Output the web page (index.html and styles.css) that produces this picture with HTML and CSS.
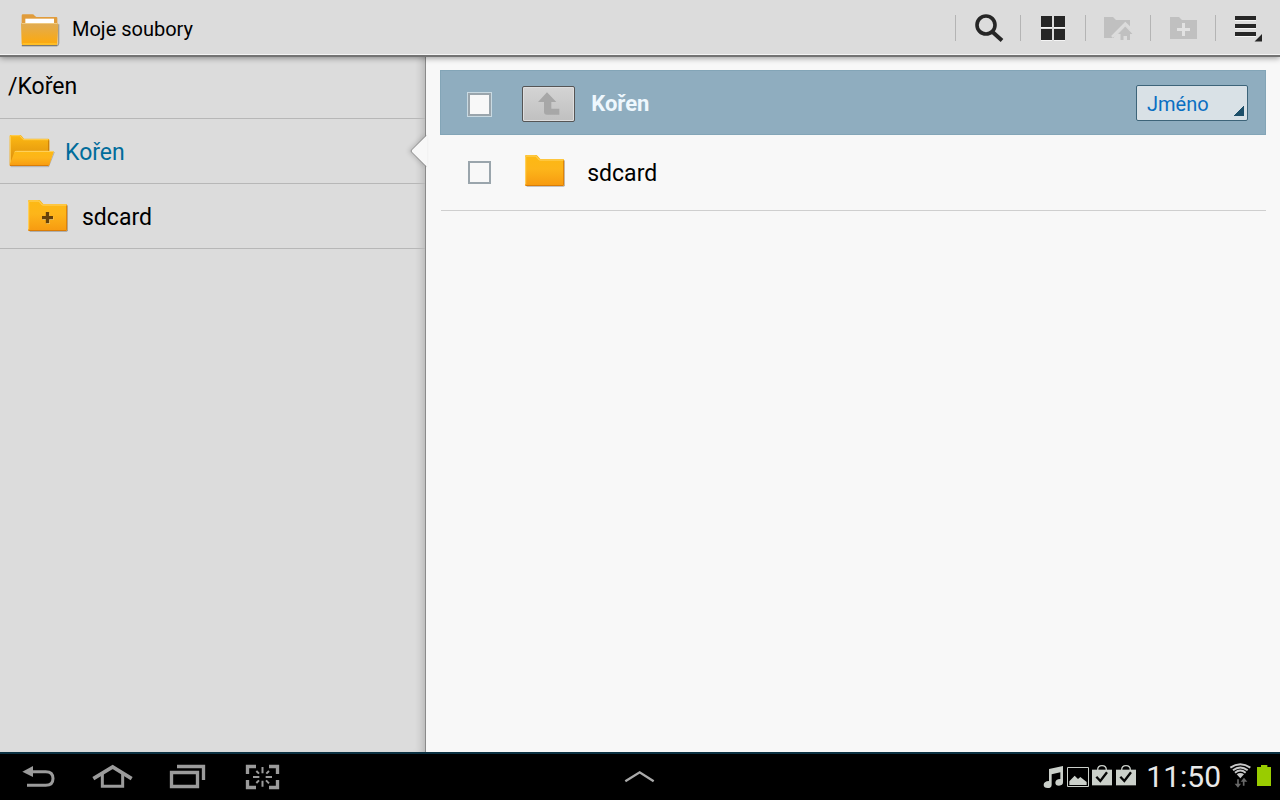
FILE: index.html
```html
<!DOCTYPE html>
<html lang="cs">
<head>
<meta charset="utf-8">
<title>Moje soubory</title>
<link rel="stylesheet" href="styles.css">
</head>
<body>
<svg class="defs" width="0" height="0" aria-hidden="true">
  <defs>
    <linearGradient id="gold" x1="0" y1="0" x2="0" y2="1">
      <stop offset="0" stop-color="#fdb913"/><stop offset=".45" stop-color="#fdb51a"/><stop offset="1" stop-color="#f79a10"/>
    </linearGradient>
    <linearGradient id="back" x1="0" y1="0" x2="0" y2="1">
      <stop offset="0" stop-color="#fdb913"/><stop offset="1" stop-color="#d98a0c"/>
    </linearGradient>
    <linearGradient id="app" x1="0" y1="0" x2="0" y2="1">
      <stop offset="0" stop-color="#dfac57"/><stop offset="1" stop-color="#ffa908"/>
    </linearGradient>
    <symbol id="folder" viewBox="0 0 120 96">
      <path d="M5 94h111q3 0 3-4V16" fill="none" stroke="#000" stroke-opacity=".25" stroke-width="3"/>
      <path d="M0 4q0-4 4-4h29q3 0 5 3l8 9h68q3 0 3 3v74q0 4-4 4H4q-4 0-4-4z" fill="url(#gold)"/>
      <path d="M2 88V5q0-2 3-2h27l11 12h71" fill="none" stroke="#ffd568" stroke-width="3"/>
      <path d="M2 91.500h112q2 0 2-3V17" fill="none" stroke="#d97d08" stroke-width="3"/>
    </symbol>
  </defs>
</svg>

<header class="topbar">
  <svg class="app-icon" width="40" height="34" viewBox="0 0 120 102" aria-hidden="true">
    <path d="M5 98h107q4-2 4-8V34" fill="none" stroke="#77736a" stroke-opacity=".6" stroke-width="4"/>
    <path d="M5 8q0-4 4-4h28q4 0 7 4l5 4h60q3 0 3 4v20H5z" fill="#e09c3c"/>
    <path d="M16 17h86v14H16z" fill="#fff"/>
    <path d="M3 33q0-3 3-3h105q4 0 4 4l-3 58q0 4-4 4H9q-4 0-4-4z" fill="url(#app)"/>
    <path d="M5 31.500h108" stroke="#f0ca80" stroke-width="3"/>
    <path d="M8 93h102" stroke="#ffd23f" stroke-width="3"/>
    <path d="M6 98h105" stroke="#77736a" stroke-width="3"/>
  </svg>
  <h1 class="app-title">Moje soubory</h1>
  <div class="actions">
    <button class="action" aria-label="Hledat"><svg width="64" height="28" viewBox="0 0 64 28">
      <circle cx="30" cy="10" r="9" fill="none" stroke="#262626" stroke-width="3.600"/><path d="M36 16.500l10 9" stroke="#262626" stroke-width="4"/></svg></button>
    <button class="action" aria-label="Mřížka"><svg width="64" height="28" viewBox="0 0 64 28">
      <path d="M20 2h11v11H20zM33 2h11v11H33zM20 15h11v11H20zM33 15h11v11H33z" fill="#fff" opacity=".7"/>
      <path d="M20 1h11v11H20zM33 1h11v11H33zM20 14h11v11H20zM33 14h11v11H33z" fill="#262626"/></svg></button>
    <button class="action" aria-label="Domů" disabled><svg width="64" height="28" viewBox="0 0 64 28">
      <path d="M18 2h9l3 3h14v18H18z" fill="#c0c0c0"/>
      <path d="M28 21.500L39.300 10l8 8V25H28z" fill="#dcdcdc"/>
      <path d="M26 22l13.300-13.500L49 18" fill="none" stroke="#dcdcdc" stroke-width="2.500"/>
      <path d="M39.300 11.500l7.200 7.500h-2.500v6h-3v-4h-3.500v4h-3v-6H32z" fill="#c0c0c0"/></svg></button>
    <button class="action" aria-label="Nová složka" disabled><svg width="64" height="28" viewBox="0 0 64 28">
      <path d="M19 2h9l3 3h15v19H19z" fill="#c0c0c0"/><path d="M26 14.500h13M32.500 8v13" stroke="#e2e2e2" stroke-width="3"/></svg></button>
    <button class="action" aria-label="Nabídka"><svg width="64" height="28" viewBox="0 0 64 28">
      <path d="M19 4h21v2H19zM19 12h21v2H19zM19 20h21v2H19z" fill="#fff" opacity=".7"/>
      <path d="M19 1h21v4H19zM19 9h21v4H19zM19 17h21v4H19zM46 19v7.500h-7.500z" fill="#262626"/></svg></button>
  </div>
</header>

<div class="workspace">
  <nav class="tree" aria-label="Složky">
    <div class="path">/Kořen</div>
    <a class="node node-open" href="#root">
      <svg class="node-icon" width="46" height="34" viewBox="0 0 138 102" aria-hidden="true">
        <path d="M5 98h114l17-44" fill="none" stroke="#000" stroke-opacity=".2" stroke-width="3"/>
        <path d="M2 6q0-3 3-3h28q3 0 5 3l7 8h72q4 0 4 4v74H2z" fill="url(#back)"/>
        <path d="M4 90V7q0-2 3-2h25l11 12h74" fill="none" stroke="#ffcf55" stroke-width="3"/>
        <path d="M119 19v33" stroke="#c87b08" stroke-width="3"/>
        <path d="M16 55q1-4 5-4h111q3 0 2 4l-13 38q-1 3-4 3H4q-3 0-2-4z" fill="url(#gold)"/>
        <path d="M17 54q2-2 5-2h110" fill="none" stroke="#ffd568" stroke-width="3"/>
        <path d="M3 94.500h115" stroke="#d97d08" stroke-width="3"/>
      </svg>
      <span>Kořen</span>
      <svg class="pointer" width="17" height="34" viewBox="0 0 17 34" aria-hidden="true">
        <path d="M17 1L1.500 16q-.8 1 0 2L17 33z" fill="#f8f8f8"/><path d="M16 1.500L1.500 16q-.8 1 0 2L16 32.500" fill="none" stroke="#8c8c8c"/>
      </svg>
    </a>
    <a class="node node-child" href="#sdcard">
      <svg class="node-icon" width="40" height="32" viewBox="0 0 120 96" aria-hidden="true">
        <use href="#folder"/>
        <path d="M43 55h33M60 38v34" stroke="#ffd87a" stroke-width="10"/>
        <path d="M42 53h33M58.500 36v34" stroke="#66410a" stroke-width="10"/>
      </svg>
      <span>sdcard</span>
    </a>
  </nav>

  <main class="files">
    <div class="list-head">
      <input class="check" type="checkbox" aria-label="Vybrat vše">
      <button class="up" aria-label="O úroveň výš"><svg width="22" height="24" viewBox="0 0 66 72">
        <path d="M27 1L55 30H40v20h24v18H27q-9 0-9-9V30H0z" fill="#a7a7a7"/></svg></button>
      <h2 class="list-title">Kořen</h2>
      <div class="sort">
        <select class="sort-select" aria-label="Seřadit podle"><option>Jméno</option></select>
      </div>
    </div>
    <div class="file">
      <input class="check" type="checkbox" id="file-sdcard">
      <svg class="file-icon" width="40" height="32" aria-hidden="true"><use href="#folder"/></svg>
      <label for="file-sdcard">sdcard</label>
    </div>
  </main>
</div>

<footer class="sysbar">
  <div class="keys">
    <button class="key" aria-label="Zpět"><svg width="75" height="46" viewBox="0 42 225 138">
      <path d="M81 136h56q22 0 22-20.500T137 95H95" fill="none" stroke="#9b9b9b" stroke-width="9"/><path d="M67 95l32-17v33z" fill="#9b9b9b"/></svg></button>
    <button class="key" aria-label="Plocha"><svg width="75" height="46" viewBox="225 42 225 138">
      <path d="M280 116l58-35 57 35" fill="none" stroke="#9b9b9b" stroke-width="11"/><path d="M307 102v37h61v-37" fill="none" stroke="#9b9b9b" stroke-width="9"/></svg></button>
    <button class="key" aria-label="Poslední aplikace"><svg width="75" height="46" viewBox="450 42 225 138">
      <path d="M514.500 97.500h78v42h-78zM531 79.500h79.500V120" fill="none" stroke="#9b9b9b" stroke-width="10"/></svg></button>
    <button class="key" aria-label="Snímek obrazovky"><svg width="75" height="46" viewBox="675 42 225 138">
      <path d="M742.500 102V79.500H768M807 79.500h25.500V102M832.500 120v22.500H807M768 142.500h-25.500V120" fill="none" stroke="#9b9b9b" stroke-width="10"/>
      <path d="M787.500 81v19M787.500 122v18M759 111h19M797 111h19M769 93l8 8M798 121l9 9M807 93l-8 8M777 121l-8 8" stroke="#9b9b9b" stroke-width="6"/></svg></button>
  </div>
  <button class="key" aria-label="Panel aplikací"><svg width="80" height="46" viewBox="0 42 240 138">
    <path d="M76 124l43-27 42 27" fill="none" stroke="#aaa" stroke-width="7"/></svg></button>
  <div class="status">
    <svg width="100" height="46" viewBox="36 42 300 138" aria-hidden="true">
      <path d="M57 87l42-9v49q0 10-12 10-11 0-11-9 0-10 15-11V97l-26 6v31q0 10-12 10-12 0-12-9 0-11 16-12z" fill="#cbd0ca"/>
      <path d="M112.500 82.500h63v57h-63z" fill="none" stroke="#cbd0ca" stroke-width="3"/>
      <path d="M118 135v-11l16-17 10 10 7-6 19 15v9z" fill="#cbd0ca"/>
      <g id="bag"><path d="M186 89h60v47h-60z" fill="#cbd0ca"/><path d="M203 90q0-13 13-13t13 13" fill="none" stroke="#cbd0ca" stroke-width="4"/><path d="M199 110l12 13 20-26" fill="none" stroke="#050505" stroke-width="7"/></g>
      <use href="#bag" x="72"/>
    </svg>
    <time class="clock">11:50</time>
    <svg width="50" height="46" viewBox="594 42 150 138" aria-hidden="true">
      <path d="M631 115l-11-12q11-8 22 0z" fill="#c8c8c8"/>
      <path d="M615 98q16-13 32 0M609 91q22-17 44 0M601 83q30-20 60 0" fill="none" stroke="#c8c8c8" stroke-width="6"/>
      <path d="M624 118v20M641 119v18" stroke="#686868" stroke-width="5"/><path d="M614 131h19l-9 12zM632 125l10-12 10 12z" fill="#686868"/>
      <path d="M681 81h12v-6h19v6h11v57h-42z" fill="#99cc00"/>
    </svg>
  </div>
</footer>
</body>
</html>
```
FILE: styles.css
```css
* { box-sizing: border-box; }

body {
  margin: 0;
  min-height: 100vh;
  display: flex;
  flex-direction: column;
  background: #f8f8f8;
  color: #000;
  font: 23px/26px Roboto, "Noto Sans", sans-serif;
}

button { padding: 0; border: 0; background: none; }
svg { display: block; flex: none; }
.defs { position: absolute; }

.topbar {
  position: relative;
  z-index: 2;
  display: flex;
  align-items: center;
  height: 57px;
  padding-left: 20px;
  background: #dcdcdc;
  border-bottom: 2px solid #737373;
  box-shadow: inset 0 -1px #f4f4f4, 0 1px 6px rgba(0, 0, 0, .4);
}
.app-icon { margin-top: 5px; }
.app-title {
  margin: 2px 0 0 12px;
  font-size: 20px;
  font-weight: 400;
}
.actions { display: flex; margin-left: auto; }
.action {
  width: 65px;
  height: 26px;
  border-left: 1px solid #b4b4b4;
}
.action svg { overflow: visible; }

.workspace {
  flex: 1;
  display: grid;
  grid-template-columns: minmax(200px, 33.3%) 1fr;
}

.tree {
  background: #dcdcdc;
  border-right: 1px solid #8a8a8a;
  box-shadow: inset -8px 0 8px -6px rgba(0, 0, 0, .2);
}
.path {
  height: 62px;
  padding: 17px 8px;
  border-bottom: 1px solid #b7b7b7;
}
.node {
  position: relative;
  display: flex;
  align-items: center;
  height: 65px;
  padding-top: 4px;
  border-bottom: 1px solid #b7b7b7;
  color: inherit;
  text-decoration: none;
}
.node-icon { margin-bottom: 4px; }
.node-open {
  padding-left: 9px;
  gap: 10px;
  color: #006c9b;
}
.node-child { padding-left: 28px; gap: 14px; }
.pointer {
  position: absolute;
  right: -2px;
  top: 15px;
  filter: drop-shadow(-2px 0 2px rgba(0, 0, 0, .15));
}

.files { padding: 13px 14px; }
.list-head {
  display: flex;
  align-items: center;
  height: 65px;
  padding: 0 17px 0 27px;
  background: #8fadbf;
  border: 1px solid #83a5b7;
}
.check {
  appearance: none;
  flex: none;
  width: 23px;
  height: 23px;
  margin: 0;
  border: 2px solid #9aa5ac;
  background: #f8f8f8;
}
.list-head .check { margin-top: 3px; box-shadow: 0 0 0 1px #c9dae2; }
.up {
  display: grid;
  place-items: center;
  width: 53px;
  height: 36px;
  margin: 2px 0 0 31px;
  border: 1px solid #555;
  border-radius: 2px;
  background: linear-gradient(#d4d4d4, #c0c0c0);
  box-shadow: inset 0 0 0 1px #dedede;
}
.list-title {
  margin: 2px 0 0 16px;
  font-size: 22px;
  font-weight: 700;
  color: #eef7fd;
}
.sort {
  position: relative;
  margin-left: auto;
}
.sort-select {
  appearance: none;
  display: block;
  width: 112px;
  height: 36px;
  padding: 2px 10px 0;
  border: 1px solid #3d6479;
  border-radius: 2px;
  background: #d9e1e6;
  color: #0a6fc2;
  font: 20px/26px Roboto, "Noto Sans", sans-serif;
}
.sort::after {
  content: "";
  position: absolute;
  right: 4px;
  bottom: 5px;
  width: 10px;
  height: 10px;
  background: linear-gradient(135deg, transparent 50%, #1d4f69 50%);
  pointer-events: none;
}
.file {
  display: flex;
  align-items: center;
  height: 76px;
  margin-left: 1px;
  padding-left: 27px;
  border-bottom: 1px solid #cfcfcf;
}
.file-icon { margin: 0 22px 3px 34px; }
.file label { padding-top: 2px; }

.sysbar {
  display: grid;
  grid-template-columns: 1fr auto 1fr;
  height: 48px;
  border-top: 2px solid #0b3142;
  background: #000;
}
.keys, .status { display: flex; align-items: center; }
.status { justify-content: flex-end; padding-right: 2px; }
.clock {
  margin: 0 7px 0 4px;
  color: #e8e8e8;
  font-size: 30px;
  line-height: 34px;
}
```
